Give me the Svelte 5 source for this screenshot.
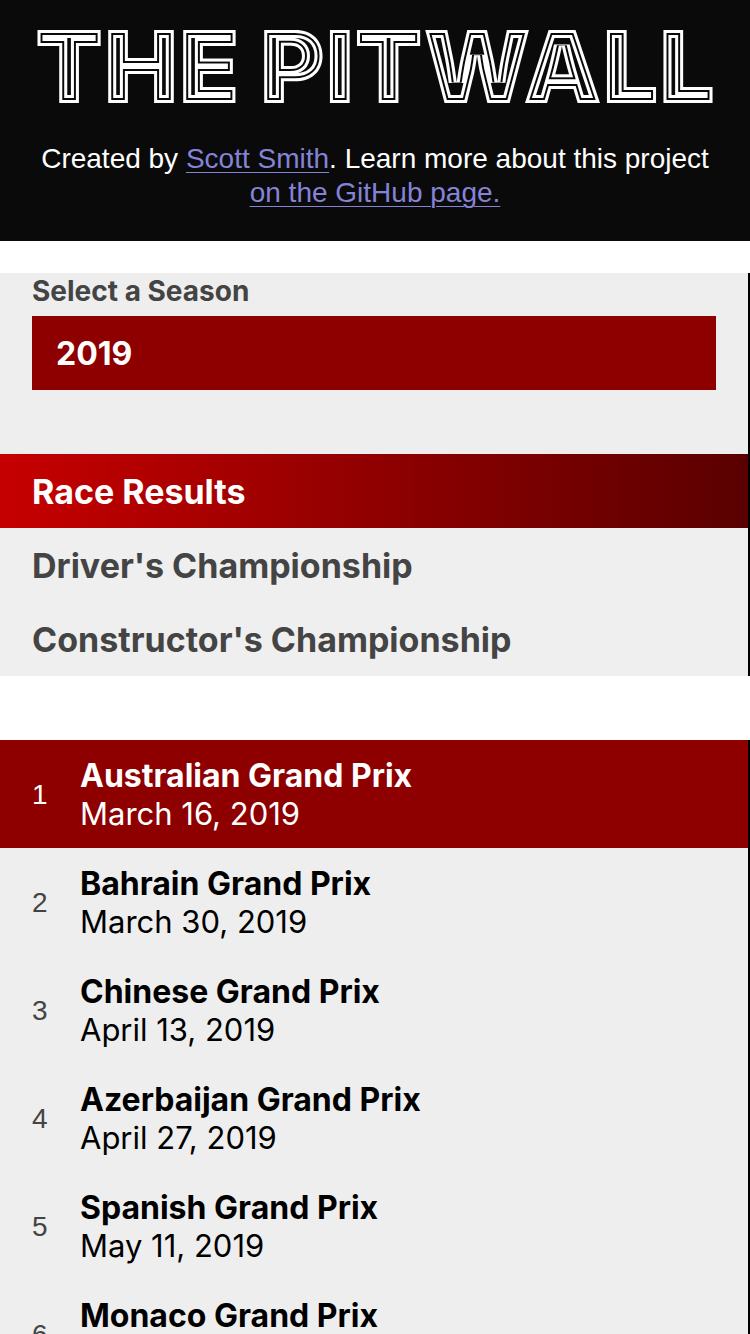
<script>
  const seasons = [2019, 2018, 2017];
  const views = ['Race Results', "Driver's Championship", "Constructor's Championship"];
  const races = [
    { round: 1, name: 'Australian Grand Prix', date: 'March 16, 2019' },
    { round: 2, name: 'Bahrain Grand Prix', date: 'March 30, 2019' },
    { round: 3, name: 'Chinese Grand Prix', date: 'April 13, 2019' },
    { round: 4, name: 'Azerbaijan Grand Prix', date: 'April 27, 2019' },
    { round: 5, name: 'Spanish Grand Prix', date: 'May 11, 2019' },
    { round: 6, name: 'Monaco Grand Prix', date: 'May 25, 2019' }
  ];
  let season = $state(2019);
  let view = $state('Race Results');
  let round = $state(1);
</script>

<div class="page">
  <header>
    <h1>
      <!-- Striped wordmark: one text, restroked inwards in alternating colours -->
      <svg class="wordmark" viewBox="0 0 686 73" role="img" aria-label="The Pitwall">
        <defs>
          <clipPath id="letters">
            <text id="title" x="343" y="72" text-anchor="middle">THE PITWALL</text>
          </clipPath>
        </defs>
        <g clip-path="url(#letters)">
          <use href="#title" class="outer" />
          <use href="#title" class="gap" />
          <use href="#title" class="rim" />
        </g>
      </svg>
    </h1>
    <p>
      Created by <a href="#author">Scott Smith</a>. Learn more about this project
      <a href="#project">on the GitHub page.</a>
    </p>
  </header>

  <section class="controls">
    <div class="season">
      <label for="season">Select a Season</label>
      <select id="season" bind:value={season}>
        {#each seasons as year}
          <option value={year}>{year}</option>
        {/each}
      </select>
    </div>
    <nav>
      {#each views as item}
        <button class:active={view === item} onclick={() => (view = item)}>{item}</button>
      {/each}
    </nav>
  </section>

  <ol class="races">
    {#each races as race}
      <li>
        <button class:active={round === race.round} onclick={() => (round = race.round)}>
          <span class="round">{race.round}</span>
          <span class="details">
            <strong>{race.name}</strong>
            <span class="date">{race.date}</span>
          </span>
        </button>
      </li>
    {/each}
  </ol>
</div>

<style>
  :global(body) {
    margin: 0;
    background: #fff;
  }
  .page {
    display: flex;
    flex-direction: column;
    height: 100vh;
    font-family: Inter, 'Liberation Sans', sans-serif;
  }
  header {
    flex: none;
    padding: 31px 32px;
    background: #0a0a0a;
    color: #fff;
    text-align: center;
  }
  h1 {
    margin: 0 0 38px;
    line-height: 0;
  }
  .wordmark {
    width: 100%;
    overflow: visible;
    font-family: Inter, sans-serif;
    font-size: 100px;
    font-weight: 900;
  }
  .wordmark .outer {
    fill: #0a0a0a;
    stroke: #fff;
    stroke-width: 16px;
  }
  .wordmark .gap {
    fill: none;
    stroke: #0a0a0a;
    stroke-width: 10px;
  }
  .wordmark .rim {
    fill: none;
    stroke: #fff;
    stroke-width: 6px;
  }
  p {
    margin: 0;
    font: 28px/34px 'Liberation Sans', Arial, sans-serif;
  }
  a {
    color: #8583d8;
    text-decoration-thickness: 1px;
    text-underline-offset: 4px;
  }
  .controls {
    flex: none;
    margin: 32px 0 64px;
    border-right: 2px solid #000;
    background: #eee;
  }
  .season {
    display: flex;
    flex-direction: column;
    padding: 0 32px 64px;
  }
  label {
    margin-bottom: 6px;
    color: #444;
    font-size: 28px;
    font-weight: 700;
    line-height: 37px;
  }
  select {
    height: 74px;
    padding: 2px 24px 0;
    border: 0;
    border-radius: 0;
    appearance: none;
    background: #8e0000;
    color: #fff;
    font: 700 32px/38px Inter, sans-serif;
  }
  nav {
    display: flex;
    flex-direction: column;
    background: #efefef;
  }
  button {
    margin: 0;
    border: 0;
    background: none;
    text-align: left;
    cursor: pointer;
  }
  nav button {
    padding: 16px 32px 14px;
    color: #444;
    font: 700 34px/44px Inter, sans-serif;
  }
  nav button.active {
    background: linear-gradient(to right, #c60000, #5a0000);
    color: #fff;
  }
  .races {
    flex: 1;
    min-height: 0;
    margin: 0;
    padding: 0;
    overflow-y: auto;
    scrollbar-width: none;
    border-right: 2px solid #000;
    background: #eee;
    list-style: none;
  }
  .races button {
    display: flex;
    align-items: center;
    width: 100%;
    padding: 17px 32px 15px;
    color: #000;
    font: 32px/38px Inter, sans-serif;
  }
  .date {
    font-size: 31px;
  }
  .round {
    width: 48px;
    color: #444;
    font: 28px/34px 'Liberation Sans', Arial, sans-serif;
  }
  .details {
    display: flex;
    flex-direction: column;
  }
  .races button.active {
    background: #8e0000;
    color: #fff;
  }
  .active .round {
    color: #fff;
  }
</style>
